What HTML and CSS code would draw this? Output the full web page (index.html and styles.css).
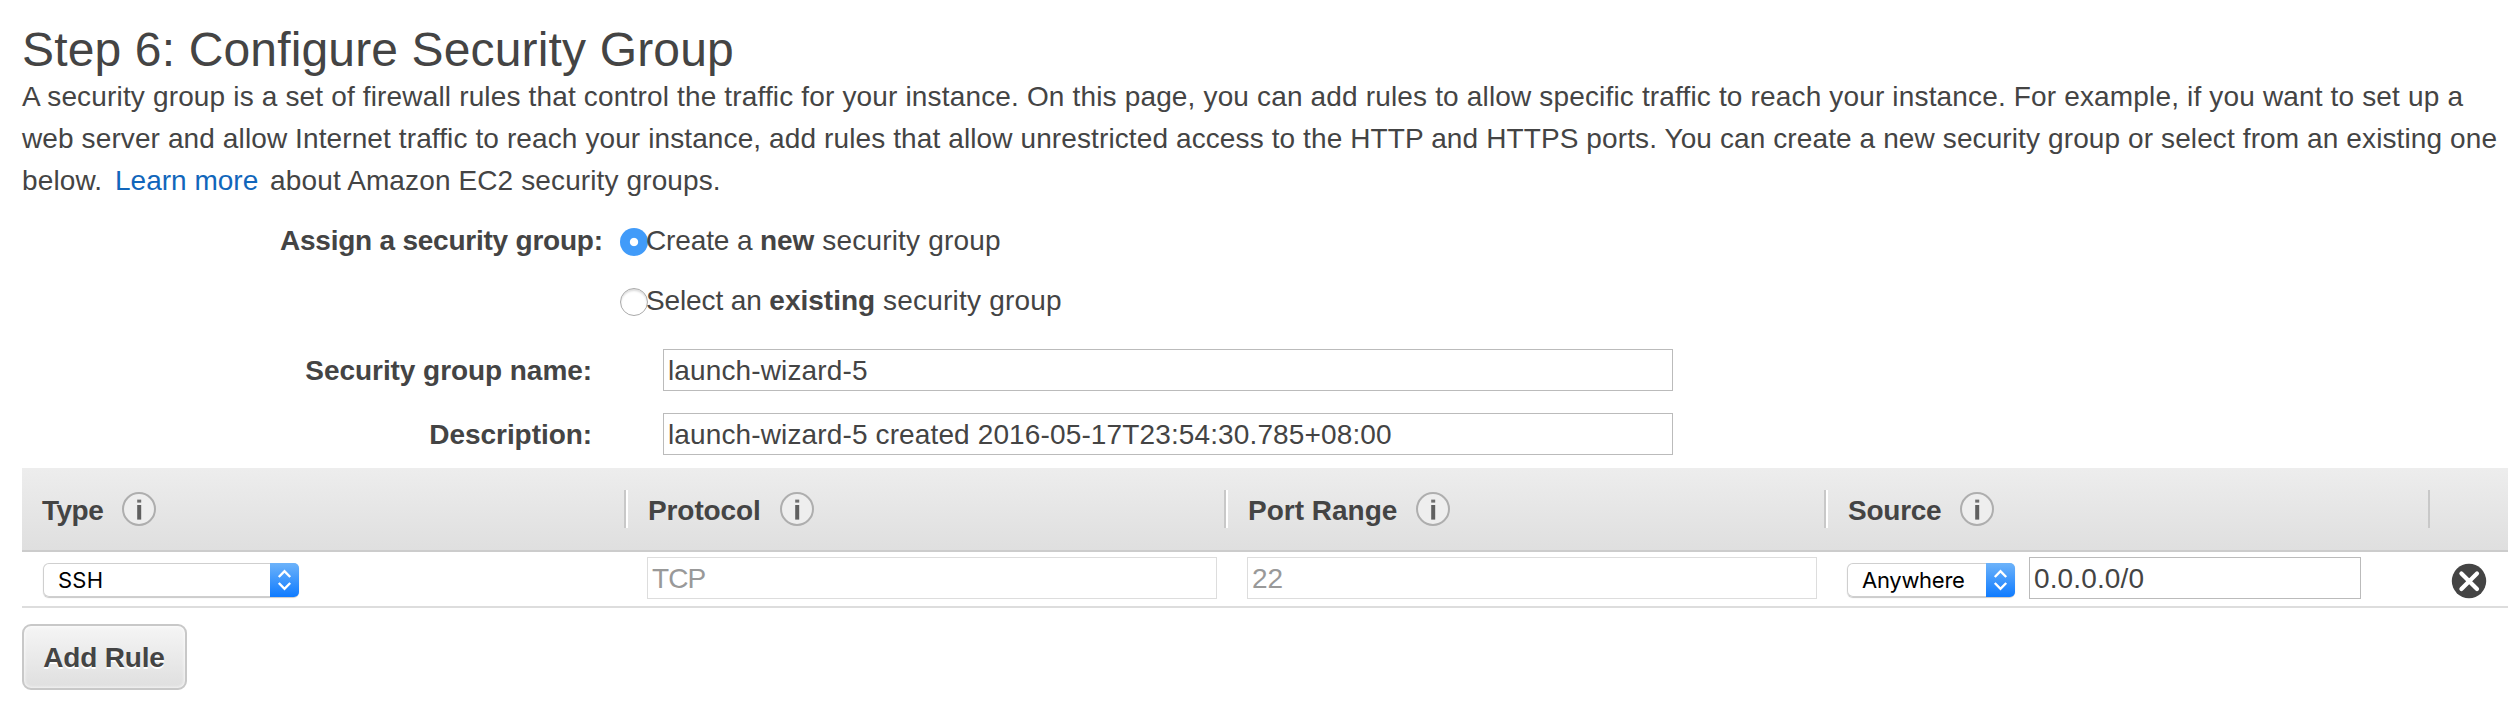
FILE: index.html
```html
<!DOCTYPE html>
<html lang="en">
<head>
<meta charset="utf-8">
<title>Step 6: Configure Security Group</title>
<link rel="stylesheet" href="styles.css">
</head>
<body>
<svg class="defs" width="0" height="0" aria-hidden="true">
  <linearGradient id="blue" x1="0" y1="0" x2="0" y2="1"><stop offset="0" stop-color="#6db3fa"/><stop offset="1" stop-color="#0f7bff"/></linearGradient>
  <symbol id="info" viewBox="0 0 36 36">
    <circle cx="18" cy="18" r="16" fill="#eee" stroke="#aeaeae" stroke-width="2"/>
    <rect x="16.2" y="8.6" width="4" height="3" fill="#707070"/>
    <rect x="16.2" y="14" width="4" height="14.6" fill="#606060"/>
  </symbol>
  <symbol id="arrows" viewBox="0 0 29 34">
    <path d="M0 0H24a5 5 0 0 1 5 5V29a5 5 0 0 1-5 5H0Z" fill="url(#blue)"/>
    <path d="M8.8 14 14.5 8.2 20.2 14M8.8 20 14.5 25.8 20.2 20" fill="none" stroke="#fff" stroke-width="2.4"/>
  </symbol>
</svg>
<main class="page">
  <h1 class="title">Step 6: Configure Security Group</h1>
  <p class="intro">
    <span class="line line-one">A security group is a set of firewall rules that control the traffic for your instance. On this page, you can add rules to allow specific traffic to reach your instance. For example, if you want to set up a</span>
    <span class="line line-two">web server and allow Internet traffic to reach your instance, add rules that allow unrestricted access to the HTTP and HTTPS ports. You can create a new security group or select from an existing one</span>
    <span class="line line-three">below. <a class="link">Learn more</a> <span>about Amazon EC2 security groups.</span></span>
  </p>

  <div class="form">
    <div class="choice">
      <span class="choice-label">Assign a security group:</span>
      <span class="radio radio-on"></span>
      <span class="choice-text"><span>Create a </span><b class="new">new</b><span class="tail"> security group</span></span>
    </div>
    <div class="choice">
      <span class="choice-label"></span>
      <span class="radio"></span>
      <span class="choice-text"><span>Select an </span><b>existing</b><span class="tail"> security group</span></span>
    </div>
    <div class="field name-field"><label class="field-label">Security group name:</label><div class="input">launch-wizard-5</div></div>
    <div class="field"><label class="field-label">Description:</label><div class="input">launch-wizard-5 created 2016-05-17T23:54:30.785+08:00</div></div>
  </div>

  <section class="table">
    <div class="grid head">
      <div class="th first"><span class="type">Type</span><svg class="info"><use href="#info"/></svg></div>
      <div class="th"><span class="protocol">Protocol</span><svg class="info"><use href="#info"/></svg></div>
      <div class="th"><span>Port Range</span><svg class="info"><use href="#info"/></svg></div>
      <div class="th"><span class="source">Source</span><svg class="info"><use href="#info"/></svg></div>
      <div class="th last"></div>
    </div>
    <div class="grid row">
      <div class="td first-td"><div class="select type-select"><span class="ssh">SSH</span><svg class="arrows"><use href="#arrows"/></svg></div></div>
      <div class="td"><div class="input disabled tcp">TCP</div></div>
      <div class="td"><div class="input disabled">22</div></div>
      <div class="td"><div class="select source-select"><span>Anywhere</span><svg class="arrows"><use href="#arrows"/></svg></div><div class="input cidr">0.0.0.0/0</div></div>
      <div class="td close-td"><svg class="close" viewBox="0 0 36 36"><circle cx="18" cy="18" r="17.2" fill="#444"/><path d="M10.4 10.4 26 26M26 10.4 10.4 26" stroke="#fff" stroke-width="4.2" stroke-linecap="round"/></svg></div>
    </div>
  </section>
  <button class="add">Add Rule</button>
</main>
</body>
</html>
```
FILE: styles.css
```css
* { box-sizing: border-box; }
body {
  margin: 0;
  background: #fff;
  color: #444;
  font: 28px/42px "Liberation Sans", Arial, sans-serif;
}
.defs { position: absolute; }
.page { height: 716px; padding: 22px 6px 0 22px; overflow: hidden; }
.title {
  height: 54px;
  margin: 0;
  font-size: 48px;
  line-height: 56px;
  font-weight: 400;
  letter-spacing: .15px;
}
.intro { margin: 0; }
.line { display: block; white-space: nowrap; }
.line-one { letter-spacing: .16px; }
.line-two { letter-spacing: .11px; }
.line-three { letter-spacing: .12px; }
.link { color: #1166bb; margin: 0 4px 0 5px; letter-spacing: 0; }

.form { height: 266px; padding-top: 18px; white-space: nowrap; }
.choice { display: grid; grid-template-columns: 598px 26px 1fr; height: 60px; }
.choice-label { padding-left: 258px; font-weight: 700; letter-spacing: -.23px; }
.radio {
  width: 28px;
  height: 28px;
  margin-top: 8px;
  border-radius: 50%;
  border: 1px solid #aaa;
  box-shadow: inset 0 2px 2px #ddd;
}
.radio-on {
  border: 0;
  background: radial-gradient(circle, #fff 3.7px, #419bf9 4.6px);
  box-shadow: none;
}
.choice-text { white-space: pre; letter-spacing: -.12px; }
.choice-text b { letter-spacing: 0; }
.choice-text .new { letter-spacing: -.1px; }
.choice-text .tail { letter-spacing: .2px; }
.field { display: grid; grid-template-columns: 570px 1010px; column-gap: 71px; height: 64px; align-items: start; }
.name-field { margin-top: 9px; }
.field-label { padding-top: 1px; text-align: right; font-weight: 700; letter-spacing: -.06px; }
.input {
  height: 42px;
  padding-left: 4px;
  border: 1px solid #bbb;
  line-height: 42px;
  letter-spacing: .13px;
}

.grid { display: grid; grid-template-columns: 602px 600px 600px 604px 80px; }
.head {
  height: 84px;
  padding-top: 22px;
  border-bottom: 2px solid #ccc;
  background: linear-gradient(#ededed, #dfdfdf);
}
.th {
  display: flex;
  gap: 18px;
  height: 38px;
  padding-left: 22px;
  border-left: 2px solid #c8c8c8;
  box-shadow: inset 2px 0 #fff;
  font-weight: 700;
}
.th.first { border: 0; box-shadow: none; padding-left: 20px; }
.th.last { box-shadow: none; }
.type { letter-spacing: -.5px; }
.protocol { letter-spacing: -.1px; }
.source { letter-spacing: -.25px; }
.info { width: 36px; height: 36px; margin-top: 1px; }
.row { height: 56px; padding-top: 5px; border-bottom: 2px solid #ddd; }
.td { display: flex; padding-left: 23px; }
.first-td { padding-left: 21px; }
.disabled { width: 570px; border-color: #ddd; color: #999; letter-spacing: 0; }
.tcp { letter-spacing: -.9px; }
.cidr { width: 332px; margin-left: 14px; }
.select {
  display: flex;
  justify-content: space-between;
  height: 34px;
  margin-top: 6px;
  border-radius: 6px;
  color: #000;
  font: 22px/34px Inter, sans-serif;
  letter-spacing: -.28px;
  box-shadow: inset 0 0 0 1px #cfcfcf, 0 1px 1px rgba(0, 0, 0, .22);
}
.type-select { width: 256px; padding-left: 15px; }
.source-select { width: 168px; padding-left: 15px; }
.ssh { letter-spacing: .2px; }
.arrows { width: 29px; height: 34px; }
.close-td { padding-left: 23px; }
.close { width: 36px; height: 36px; margin-top: 6px; }
.add {
  display: block;
  width: 165px;
  height: 66px;
  margin-top: 16px;
  padding: 1px 1px 0 0;
  border: 2px solid #c8c8c8;
  border-radius: 9px;
  background: linear-gradient(#f5f5f5, #dfdfdf);
  box-shadow: inset 0 0 3px 1px rgba(255, 255, 255, .65);
  color: #444;
  font: 700 28px/42px "Liberation Sans", Arial, sans-serif;
  letter-spacing: -.2px;
  text-shadow: 0 2px #fff;
}
```
